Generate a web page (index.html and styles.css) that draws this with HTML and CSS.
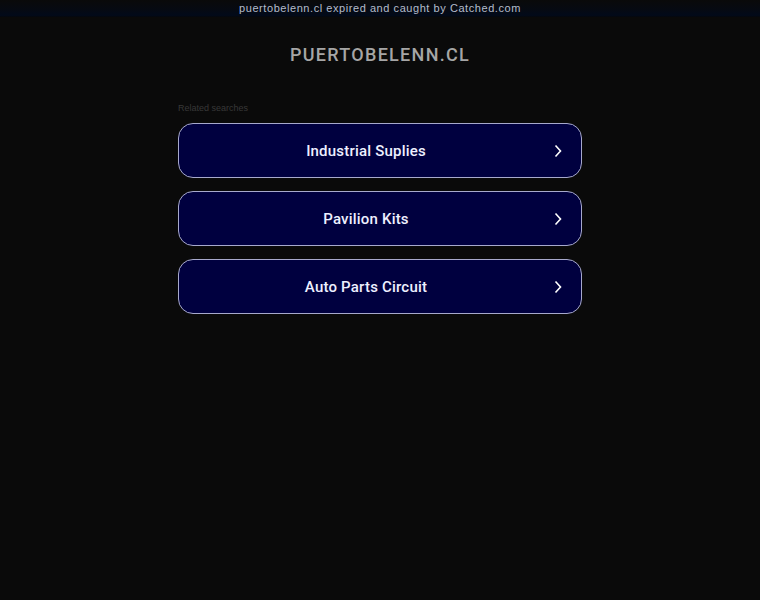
FILE: index.html
```html
<!DOCTYPE html>
<html>
<head>
<meta charset="utf-8">
<link rel="stylesheet" href="styles.css">
</head>
<body>
<div class="topbar">puertobelenn.cl expired and caught by Catched.com</div>
<h1 class="domain">PUERTOBELENN.CL</h1>
<div class="wrap">
  <div class="related">Related searches</div>
  <a class="link" href="#"><span class="label">Industrial Suplies</span><svg class="chev" viewBox="0 0 10 14" width="10" height="14"><path d="M2.5 1.5 L7.5 7 L2.5 12.5" fill="none" stroke="#fff" stroke-width="1.6"/></svg></a>
  <a class="link" href="#"><span class="label">Pavilion Kits</span><svg class="chev" viewBox="0 0 10 14" width="10" height="14"><path d="M2.5 1.5 L7.5 7 L2.5 12.5" fill="none" stroke="#fff" stroke-width="1.6"/></svg></a>
  <a class="link" href="#"><span class="label">Auto Parts Circuit</span><svg class="chev" viewBox="0 0 10 14" width="10" height="14"><path d="M2.5 1.5 L7.5 7 L2.5 12.5" fill="none" stroke="#fff" stroke-width="1.6"/></svg></a>
</div>
</body>
</html>
```
FILE: styles.css
```css
html, body {
  margin: 0;
  padding: 0;
  background: #0a0a0a;
  font-family: "Liberation Sans", Arial, sans-serif;
}
.topbar {
  height: 17px;
  line-height: 16px;
  text-align: center;
  font-size: 11px;
  letter-spacing: 0.56px;
  color: #b4bccb;
  background: linear-gradient(to bottom, #0a0a0a 0%, #060a12 55%, #020a1a 90%, #06080c 100%);
}
.domain {
  margin: 27px 0 0;
  text-align: center;
  font-family: Roboto, "Liberation Sans", sans-serif;
  font-size: 18px;
  font-weight: 500;
  letter-spacing: 1.3px;
  color: #a6a6a6;
  line-height: 22px;
}
.wrap {
  width: 404px;
  margin: 36px auto 0;
  display: flex;
  flex-direction: column;
  gap: 13px;
}
.related {
  font-size: 9px;
  color: #383838;
  line-height: 12px;
  margin-bottom: -4px;
}
.link {
  position: relative;
  display: flex;
  align-items: center;
  justify-content: center;
  height: 53px;
  padding-right: 28px;
  border: 1px solid #a7a9cc;
  border-radius: 15px;
  background: #00003f;
  color: #eef0ff;
  text-decoration: none;
  font-family: Roboto, "Liberation Sans", sans-serif;
  font-size: 15px;
  font-weight: 500;
  letter-spacing: 0.2px;
}
.chev {
  position: absolute;
  right: 18px;
  top: 20px;
}
```
